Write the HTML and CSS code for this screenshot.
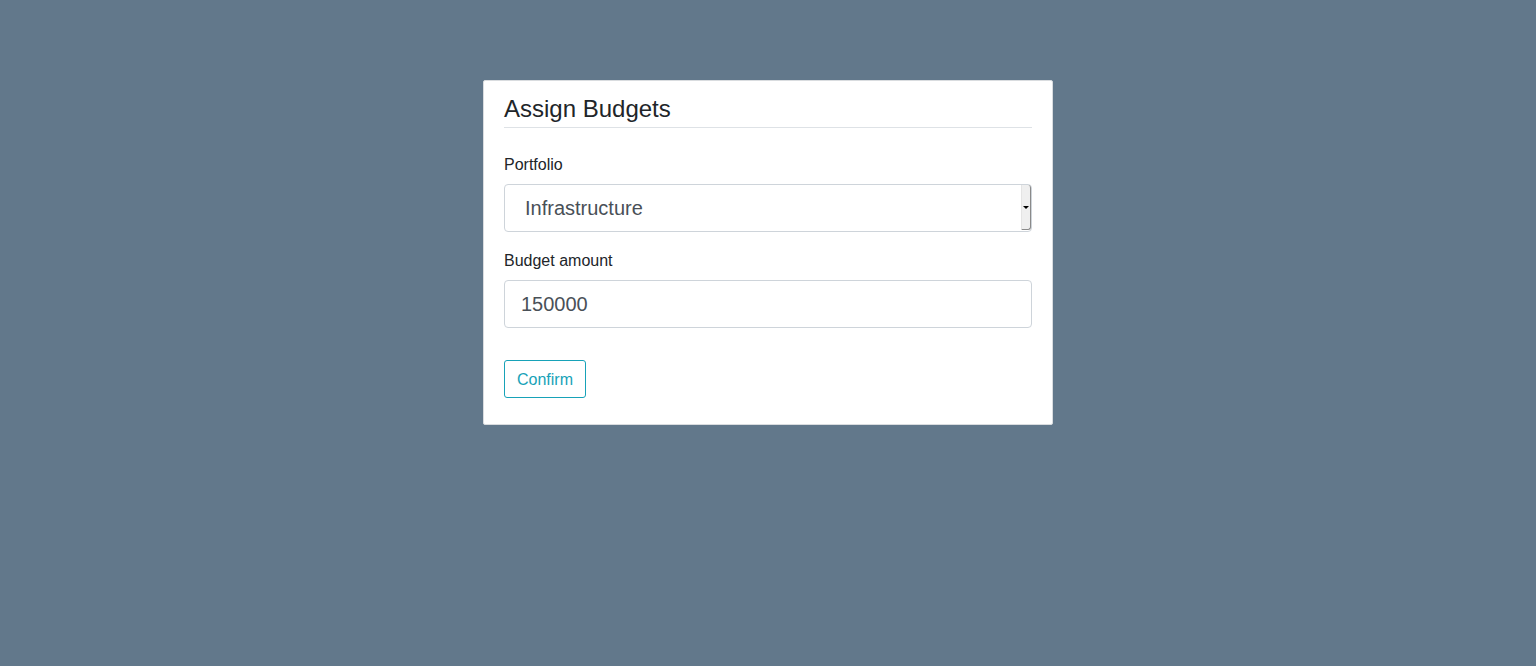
FILE: index.html
```html
<!DOCTYPE html>
<html>
<head>
<meta charset="utf-8">
<link rel="stylesheet" href="styles.css">
</head>
<body>
<div class="page">
  <div class="card">
    <h3 class="title">Assign Budgets</h3>
    <div class="group">
      <label class="label">Portfolio</label>
      <div class="select-wrap">
        <select class="control select">
          <option>Infrastructure</option>
        </select>
        <span class="select-btn"><span class="caret"></span></span>
      </div>
    </div>
    <div class="group">
      <label class="label">Budget amount</label>
      <input class="control input" type="text" value="150000">
    </div>
    <button class="btn">Confirm</button>
  </div>
</div>
</body>
</html>
```
FILE: styles.css
```css
html, body {
  margin: 0;
  padding: 0;
  background: #62788b;
  height: 100%;
}
body {
  font-family: "Liberation Sans", Arial, sans-serif;
  color: #212529;
}
.page {
  display: flex;
  justify-content: center;
  padding-top: 80px;
}
.card {
  width: 528px;
  background: #fff;
  border: 1px solid #d9dcdf;
  border-radius: 2px;
  padding: 10px 20px 26px 20px;
  display: flex;
  flex-direction: column;
}
.title {
  margin: 0;
  font-size: 24px;
  font-weight: 400;
  line-height: 36px;
  color: #212529;
  border-bottom: 1px solid #dee2e6;
  height: 36px;
}
.group {
  display: flex;
  flex-direction: column;
  margin-top: 27px;
}
.group + .group {
  margin-top: 19px;
}
.label {
  font-size: 16px;
  line-height: 20px;
  margin-bottom: 9px;
  color: #212529;
}
.control {
  box-sizing: border-box;
  width: 528px;
  height: 48px;
  border: 1px solid #ced4da;
  border-radius: 4px;
  background: #fff;
  font-family: "Liberation Sans", Arial, sans-serif;
  font-size: 20px;
  color: #495057;
  margin: 0;
  outline: none;
}
.select-wrap {
  position: relative;
  width: 528px;
}
.select {
  -webkit-appearance: none;
  appearance: none;
  padding: 0 20px;
}
.input {
  padding: 0 16px;
}
.select-btn {
  position: absolute;
  right: 1px;
  top: 1px;
  width: 8px;
  height: 44px;
  background: #efefef;
  border-left: 1px solid #e4e4e4;
  border-right: 1px solid #8a8a8a;
  border-bottom: 1px solid #8a8a8a;
  border-radius: 0 3px 3px 0;
  display: flex;
  align-items: center;
  justify-content: center;
}
.caret {
  width: 0;
  height: 0;
  border-left: 3px solid transparent;
  border-right: 3px solid transparent;
  border-top: 3px solid #000;
}
.btn {
  align-self: flex-start;
  margin-top: 32px;
  height: 38px;
  padding: 2px 12px 0 12px;
  border: 1px solid #17a2b8;
  border-radius: 3px;
  background: #fff;
  color: #17a2b8;
  font-family: "Liberation Sans", Arial, sans-serif;
  font-size: 16px;
}
```
